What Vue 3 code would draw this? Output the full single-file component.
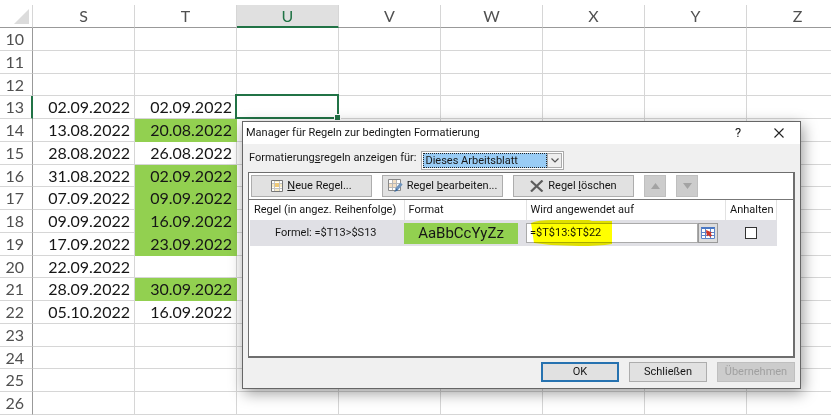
<script setup>
import { ref } from 'vue'

const columns = ['S', 'T', 'U', 'V', 'W', 'X', 'Y', 'Z']
const dates = {
  13: ['02.09.2022', '02.09.2022', false],
  14: ['13.08.2022', '20.08.2022', true],
  15: ['28.08.2022', '26.08.2022', false],
  16: ['31.08.2022', '02.09.2022', true],
  17: ['07.09.2022', '09.09.2022', true],
  18: ['09.09.2022', '16.09.2022', true],
  19: ['17.09.2022', '23.09.2022', true],
  20: ['22.09.2022', '', false],
  21: ['28.09.2022', '30.09.2022', true],
  22: ['05.10.2022', '16.09.2022', false],
}
const rows = Array.from({ length: 17 }, (_, i) => {
  const n = i + 10
  const [s = '', t = '', marked = false] = dates[n] || []
  return { n, values: { S: s, T: t }, marked }
})
const scope = ref('sheet')
const range = ref('=$T$13:$T$22')
const stop = ref(false)
</script>

<template>
  <main class="screen">
    <table class="sheet">
      <thead>
        <tr class="letters">
          <th class="corner"><svg viewBox="0 0 15 15" width="15" height="15"><path d="M15 0V15H0Z" fill="#dcdcdc" /></svg></th>
          <th v-for="c in columns" :key="c" :class="{ active: c === 'U' }">{{ c }}</th>
        </tr>
      </thead>
      <tbody>
        <tr v-for="row in rows" :key="row.n">
          <th :class="{ current: row.n === 13 }">{{ row.n }}</th>
          <td
            v-for="c in columns"
            :key="c"
            :class="{ marked: row.marked && c === 'T', selected: row.n === 13 && c === 'U' }"
          >{{ row.values[c] }}</td>
        </tr>
      </tbody>
    </table>

    <section class="dialog" role="dialog" aria-labelledby="dialog-title">
      <header class="titlebar">
        <h1 id="dialog-title">Manager für Regeln zur bedingten Formatierung</h1>
        <button class="plain help">?</button>
        <button class="plain close">
          <svg viewBox="0 0 10 10" width="10" height="10"><path d="M.5 .5 9.500 9.500M9.500 .5 .5 9.500" fill="none" stroke="#222" stroke-width="1.100" /></svg>
        </button>
      </header>

      <div class="scope">
        <label for="scope">Formatierung<u>s</u>regeln anzeigen für:</label>
        <div class="picker">
          <select id="scope" v-model="scope">
            <option value="sheet">Dieses Arbeitsblatt</option>
          </select>
          <span class="arrow"><svg viewBox="0 0 8 5" width="8" height="5"><path d="M.5 .5 4 4 7.500 .5" fill="none" stroke="#555" stroke-width="1.200" /></svg></span>
        </div>
      </div>

      <div class="panel">
        <div class="toolbar">
          <button class="tool">
            <svg viewBox="0 0 12 12" width="12" height="12">
              <path d="M.5 .5h11v11H.5z" fill="#fff" stroke="#777" />
              <path d="M3.500 1v10M8.500 1v10M1 3.500h10M1 8.500h10" stroke="#c4c4c4" />
              <path d="M4 3h4v4H4z" fill="#efc978" /><path d="M4 1h4v1H4zM1 4h2v3H1zM9 4h2v3H9zM4 9h4v2H4z" fill="#f8ecc8" />
            </svg>
            <span><u>N</u>eue Regel...</span>
          </button>
          <button class="tool">
            <svg viewBox="0 0 15 14" width="15" height="14">
              <path d="M.5 .5h12v11H.5z" fill="#fff" stroke="#888" />
              <path d="M4.500 1v10M8.500 1v10M1 4.500h11M1 8.500h11" stroke="#b8b8b8" /><path d="M5 1h3v3H5zM1 5h3v3H1zM5 5h3v3H5z" fill="#f3dfc4" />
              <path d="M13.500 4.500 8 11" stroke="#6f94bd" stroke-width="3" /><path d="M8.500 9.500 6 13l4-1.500z" fill="#3a679a" />
            </svg>
            <span>Regel <u>b</u>earbeiten...</span>
          </button>
          <button class="tool">
            <svg viewBox="0 0 14 12" width="14" height="12"><path d="M1 1 12.500 11.500M12.500 .5 1 11.500" fill="none" stroke="#5c5c5c" stroke-width="2.200" /></svg>
            <span>Regel <u>l</u>öschen</span>
          </button>
          <button class="move" disabled aria-label="Nach oben"><svg viewBox="0 0 9 6" width="9" height="6"><path d="M0 6 4.500 0 9 6Z" fill="#a3a3a3" /></svg></button>
          <button class="move" disabled aria-label="Nach unten"><svg viewBox="0 0 9 6" width="9" height="6"><path d="M0 0h9L4.500 6Z" fill="#a3a3a3" /></svg></button>
        </div>
        <table class="rules">
          <thead>
            <tr>
              <th class="rule">Regel (in angez. Reihenfolge)</th>
              <th class="format">Format</th>
              <th>Wird angewendet auf</th>
              <th class="halt">Anhalten</th>
            </tr>
          </thead>
          <tbody>
            <tr>
              <td class="formula">Formel: =$T13&gt;$S13</td>
              <td><div class="sample">AaBbCcYyZz</div></td>
              <td>
                <div class="range">
                  <input v-model="range" type="text" aria-label="Wird angewendet auf" />
                  <button aria-label="Bereich wählen">
                    <svg viewBox="0 0 14 12" width="14" height="12">
                      <path d="M0 0h14v12H0z" fill="#fff" /><path d="M0 0h14v2H0z" fill="#4a78c4" />
                      <path d="M.5 1v10.500h13V1M4.500 2v9M9.500 2v9M1 5.500h12M1 8.500h12" fill="none" stroke="#5c84c8" />
                      <path d="M5 3 11 5.500 9.500 6.500 11 8.500 9 10 7.500 8 6 9.500Z" fill="#cf3426" />
                    </svg>
                  </button>
                  <svg class="marker" viewBox="0 0 84 28" width="84" height="28"><path d="M2 4Q8 1 24 1H60L63 2H83V25Q70 27 50 27L22 26 5 24Z" fill="#ff0" /></svg>
                </div>
              </td>
              <td class="check"><input v-model="stop" type="checkbox" aria-label="Anhalten" /></td>
            </tr>
          </tbody>
        </table>
      </div>

      <footer class="actions">
        <button class="primary">OK</button>
        <button>Schließen</button>
        <button disabled>Übernehmen</button>
      </footer>
    </section>
  </main>
</template>

<style>
body { margin: 0; }
</style>

<style scoped>
* { box-sizing: border-box; }
.screen {
  position: relative;
  height: 100vh;
  overflow: hidden;
  background: #fff;
}
.sheet {
  display: flex;
  flex-direction: column;
  height: 100%;
  padding: 5px 0 2px;
  font: 16px/21px Lato, "Liberation Sans", sans-serif;
  color: #161616;
}
.sheet thead { display: block; }
.sheet tbody { display: flex; flex: 1; flex-direction: column; }
.sheet tr {
  display: grid;
  flex: 1;
  grid-template-columns: 33px repeat(8, 102px);
  min-height: 0;
}
.sheet th, .sheet td {
  min-height: 0;
  padding: 0 4px 0 0;
  border-right: 1px solid #d6d6d6;
  border-bottom: 1px solid #d6d6d6;
  text-align: right;
}
.sheet th { color: #505050; font-weight: 400; }
.sheet tbody th { padding-right: 8px; border-right-color: #999; }
.sheet .letters th {
  height: 23px;
  padding: 0;
  border-bottom-color: #999;
  text-align: center;
}
.sheet .letters .corner { padding: 4px 3px 0 0; line-height: 0; text-align: right; }
.sheet .letters .active { border-bottom: 2px solid #217346; background: #e0e0e0; color: #217346; }
.sheet tbody .current { padding-right: 7px; border-right: 2px solid #217346; }
.sheet .marked { border-color: #92d050; background: #92d050; }
.sheet .selected { position: relative; }
.selected::before {
  position: absolute;
  inset: -2px -1px -1px -2px;
  border: 2px solid #217346;
  content: "";
}
.selected::after {
  position: absolute;
  right: -2px;
  bottom: -2px;
  width: 5px;
  height: 5px;
  background: #217346;
  box-shadow: 0 0 0 1px #fff;
  content: "";
}

.dialog {
  position: absolute;
  top: 121px;
  left: 242px;
  width: 559px;
  border: 1px solid #666;
  background: #f0f0f0;
  box-shadow: 2px 4px 14px rgb(0 0 0 / 40%);
  color: #161616;
  font: 11px/16px Roboto, "Noto Sans", sans-serif;
}
button, input, select { margin: 0; color: inherit; font: inherit; }
.titlebar {
  display: flex;
  align-items: center;
  height: 22px;
  padding: 0 11px 0 3px;
  background: #fff;
}
h1 { flex: 1; margin: 0; font: inherit; }
.plain {
  display: grid;
  place-items: center;
  width: 20px;
  padding: 0;
  border: 0;
  background: none;
}
.help { margin-right: 21px; font-size: 13px; }
.scope {
  display: flex;
  gap: 5px;
  height: 28px;
  padding: 7px 0 0 6px;
}
.scope label { line-height: 14px; }
.picker {
  position: relative;
  width: 143px;
  height: 19px;
  padding: 1px;
  border: 1px solid #aaa;
  background: #fff;
}
.picker select {
  width: 124px;
  height: 15px;
  padding: 0 1px;
  border: 1px dotted #222;
  border-radius: 0;
  outline: 0;
  background: #99ccf5;
  line-height: 13px;
  appearance: none;
}
.arrow {
  position: absolute;
  top: 1px;
  right: 1px;
  display: grid;
  place-items: center;
  width: 15px;
  height: 15px;
  border: 1px solid #aaa;
  background: #eee;
  pointer-events: none;
}
.panel {
  height: 186px;
  margin: 0 5px;
  border: 2px solid #6e6e6e;
  border-width: 1px 2px 2px 1px;
  background: #fff;
}
.toolbar {
  display: flex;
  gap: 10px;
  padding: 2px;
  border-bottom: 1px solid #777;
}
.tool, .move, .actions button {
  display: flex;
  align-items: center;
  justify-content: center;
  padding: 0;
  border: 1px solid #adadad;
  background: #e1e1e1;
}
.tool { gap: 4px; width: 121px; height: 22px; }
.move, .actions button:disabled { border-color: #bfbfbf; background: #ccc; }
.move { width: 22px; height: 22px; }
.rules {
  width: 527px;
  margin-left: 1px;
  border-collapse: collapse;
  table-layout: fixed;
}
.rules th {
  height: 20px;
  padding: 0 4px;
  border-right: 1px solid #e2e2e2;
  font-weight: 400;
  text-align: left;
  white-space: nowrap;
}
.rules .rule { width: 154px; }
.rules .format { width: 122px; }
.rules .halt { width: 51px; }
.rules td { height: 26px; padding: 0; background: #e0e0e5; }
.rules .formula { padding-left: 25px; }
.sample {
  width: 114px;
  height: 21px;
  background: #92d050;
  font-size: 15px;
  line-height: 21px;
  text-align: center;
}
.range { position: relative; display: flex; width: 192px; height: 20px; }
.range input {
  flex: 1;
  min-width: 0;
  padding: 0 3px;
  border: 1px solid #aaa;
  border-radius: 0;
  background: #fff;
}
.marker {
  position: absolute;
  top: -4px;
  left: 3px;
  mix-blend-mode: multiply;
  pointer-events: none;
}
.range button {
  display: grid;
  place-items: center;
  width: 20px;
  padding: 0;
  border: 1px solid #999;
  background: #ddd;
}
.rules .check { text-align: center; }
.check input {
  display: block;
  width: 12px;
  height: 12px;
  margin: 0 auto;
  border: 1px solid #333;
  background: #fff;
  appearance: none;
}
.actions {
  display: flex;
  justify-content: flex-end;
  gap: 10px;
  padding: 4px 5px 6px;
}
.actions button { width: 78px; height: 20px; }
.actions .primary { border: 2px solid #2672b0; }
.actions button:disabled { color: #a0a0a0; }
</style>
